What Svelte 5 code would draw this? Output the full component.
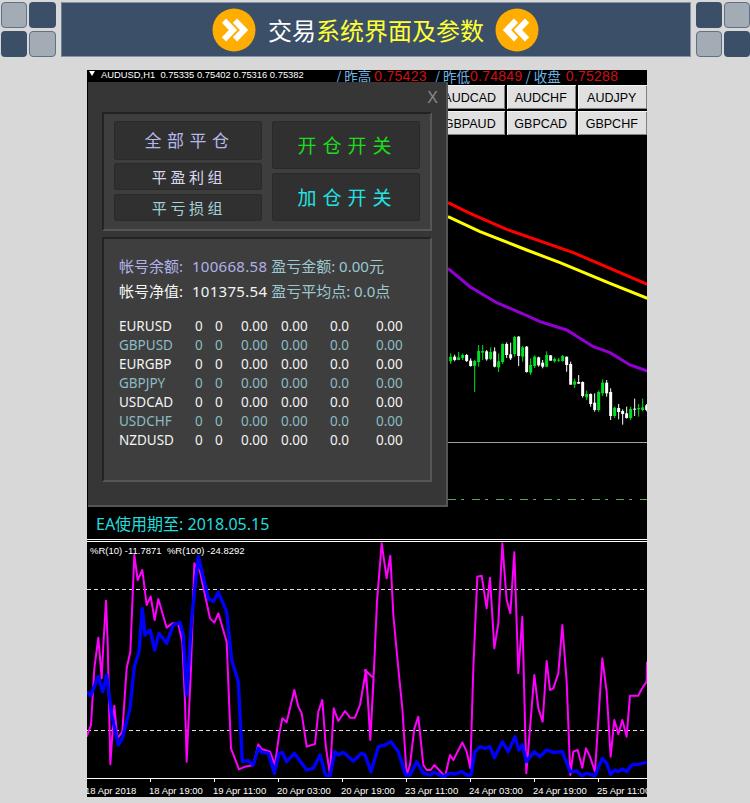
<script>
  const pts = (a, dx = 0) => a.map(([x, y]) => `${x + dx},${y}`).join(' ');
  const magL = [[5,605],[18,570],[28,400],[40,308],[50,430],[55,330],[63,197],[68,320],[76,688],[88,512],[97,610],[112,590],[125,400],[136,350],[148,60],[158,135],[172,105],[185,210],[197,185],[209,255],[220,192],[245,278],[262,265],[280,268],[292,320],[300,500],[305,680],[318,400],[328,85],[345,110],[375,250],[388,263],[400,235],[425,320],[438,640],[462,703],[480,695],[505,690],[520,628],[530,642],[555,650],[570,690],[582,600],[592,550],[605,562],[628,465],[640,515],[650,535],[665,635],[690,627],[700,530],[712,495],[722,630],[735,720],[746,520],[760,558],[780,528],[795,548],[810,548],[825,510],[843,405],[856,615],[866,430]];
  const magR = [[0,405],[8,480],[16,615],[28,380],[36,200],[50,25],[65,130],[76,62],[85,240],[100,400],[112,520],[125,720],[135,690],[148,580],[160,545],[175,690],[185,705],[197,705],[208,690],[222,705],[240,725],[255,660],[265,675],[292,622],[305,650],[316,700],[325,400],[337,125],[350,122],[365,220],[375,128],[388,340],[400,265],[412,25],[425,195],[436,235],[448,52],[460,415],[472,245],[484,715],[495,580],[508,420],[520,520],[533,560],[545,378],[555,465],[565,460],[580,415],[592,270],[605,440],[616,720],[625,650],[638,645],[652,698],[663,640],[675,665],[690,710],[712,370],[725,470],[737,665],[748,555],[760,598],[772,555],[785,605],[795,482],[820,482],[830,462],[845,440],[846,380]];
  const bluL = [[5,470],[17,482],[40,425],[53,470],[65,420],[80,540],[100,630],[112,610],[135,520],[148,395],[162,350],[172,220],[180,300],[195,285],[209,345],[222,295],[245,325],[265,270],[285,262],[295,300],[305,480],[320,250],[340,65],[370,190],[385,200],[400,172],[425,230],[440,375],[460,440],[472,680],[490,677],[505,690],[520,640],[530,652],[550,655],[568,715],[582,655],[592,652],[605,680],[628,655],[665,705],[685,700],[705,660],[722,720],[735,722],[750,650],[760,660],[775,652],[805,678],[830,655],[840,660]];
  const bluR = [[18,710],[40,635],[60,630],[78,620],[100,650],[122,720],[135,720],[155,680],[175,715],[195,720],[208,712],[235,725],[255,715],[270,717],[290,710],[305,720],[318,720],[330,650],[345,635],[360,640],[375,635],[388,668],[412,620],[430,650],[450,605],[462,645],[472,630],[484,680],[508,650],[525,665],[545,645],[565,652],[592,650],[615,710],[635,708],[650,722],[665,715],[690,722],[712,670],[725,685],[737,718],[750,705],[760,710],[772,702],[785,710],[800,690],[820,688],[845,682]];
  const magenta = pts(magL) + ' ' + pts(magR, 840);
  const blue = pts(bluL) + ' ' + pts(bluR, 840);

  const red = pts([[24,68],[90,100],[200,148],[400,218],[510,265],[622,313]]);
  const yellow = pts([[24,110],[120,155],[260,210],[360,248],[510,310],[622,355]]);
  const purple = pts([[24,265],[90,320],[170,368],[250,402],[300,425],[380,450],[460,500],[510,518],[570,555],[622,573]]);

  const candles = [
    ['g',520,552,530,544],['w',524,544,530,540],['g',516,540,532,540],['g',520,540,525,534],['w',522,546,525,543],
    ['w',535,560,542,558],['g',540,636,543,558],['g',495,560,513,546],['g',495,540,513,518],['w',510,542,514,538],
    ['g',502,540,516,537],['w',502,562,514,560],['g',520,576,544,562],['g',490,552,492,546],['w',487,534,492,525],
    ['w',488,540,523,535],['g',468,530,471,522],['w',468,558,470,528],['g',498,545,502,530],['w',498,578,500,576],
    ['g',535,585,555,578],['g',526,564,530,558],['w',530,560,532,556],['w',540,565,548,560],['g',514,562,525,560],
    ['w',525,542,526,542],['g',532,548,537,544],['g',534,546,539,542],['g',525,545,528,543],['w',530,575,530,555],
    ['w',545,614,552,614],['g',596,624,604,614],['w',585,612,606,611],['w',604,653,606,648],['g',632,660,642,652],
    ['w',640,680,642,672],['w',640,695,668,690],['g',632,695,636,690],['g',598,648,608,640],['w',600,650,608,640],
    ['w',625,720,636,708],['g',680,714,683,708],['w',672,718,684,696],['w',688,734,693,702],['w',680,716,700,714],
    ['g',680,720,687,714],['w',656,708,686,688],['g',672,710,684,688],['g',656,694,682,690],['w',672,694,676,690]
  ].map(([c, hi, lo, t, b], i) => ({ fill: c === 'g' ? '#00e020' : '#fff', x: 32 + i * 12, hi, lo, t, h: Math.max(b - t, 3) }));

  const ticks = [
    [63, '18 Apr 19:00'], [127, '19 Apr 11:00'], [191, '20 Apr 03:00'], [255, '20 Apr 19:00'],
    [319, '23 Apr 11:00'], [383, '24 Apr 03:00'], [447, '24 Apr 19:00'], [511, '25 Apr 11:00']
  ];
  const symbols = ['EURUSD', 'GBPUSD', 'EURGBP', 'GBPJPY', 'USDCAD', 'USDCHF', 'NZDUSD'];
  const buttons = ['AUDCAD', 'AUDCHF', 'AUDJPY', 'GBPAUD', 'GBPCAD', 'GBPCHF'];
</script>

<div class="page">
  <header class="top">
    <div class="tiles">
      <span class="tile light"></span><span class="tile"></span>
      <span class="tile"></span><span class="tile light"></span>
    </div>
    <div class="banner">
      <svg class="badge" viewBox="-22 -22 44 44" width="44" height="44">
        <circle r="21.5" fill="#ffad00" />
        <path d="M-10-9.3-1 0-10 9.3M1-9.3 10 0 1 9.3" fill="none" stroke="#fff" stroke-width="6" />
      </svg>
      <h1><span class="white">交易</span>系统界面及参数</h1>
      <svg class="badge" viewBox="-22 -22 44 44" width="44" height="44">
        <circle r="21.5" fill="#ffad00" />
        <path d="M10-9.3 1 0 10 9.3M-1-9.3-10 0-1 9.3" fill="none" stroke="#fff" stroke-width="6" />
      </svg>
    </div>
    <div class="tiles narrow">
      <span class="tile"></span><span class="tile light"></span>
      <span class="tile light"></span><span class="tile"></span>
    </div>
  </header>

  <section class="terminal">
    <div class="main">
      <svg class="canvas" width="560" height="469" viewBox="0 0 560 469">
        <g transform="translate(353 110) scale(.33333)">
          <polyline points={purple} class="ma" stroke="#9400d3" />
          <polyline points={yellow} class="ma" stroke="#ffff00" />
          <polyline points={red} class="ma" stroke="#ff0000" />
          {#each candles as c}
            <rect x={c.x - 1.5} y={c.hi} width="3" height={c.lo - c.hi} fill={c.fill} />
            <rect x={c.x - 4.5} y={c.t} width="9" height={c.h} fill={c.fill} />
          {/each}
        </g>
        <rect x="360" y="372" width="200" height="1" fill="#9aa3ad" />
        <line x1="361" y1="429.5" x2="560" y2="429.5" stroke="#4caf4c" stroke-dasharray="8 5 3 8" />
      </svg>

      <div class="quotes">
        <span class="tri"></span>
        <span class="ohlc">AUDUSD,H1&nbsp;&nbsp;0.75335 0.75402 0.75316 0.75382</span>
        <span class="prices">
          <i>/ 昨高</i> <b>0.75423</b> <i class="gap">/ 昨低</i><b>0.74849</b> <i>/ 收盘</i> <b class="last">0.75288</b>
        </span>
      </div>

      <div class="pairs">
        {#each buttons as b}<div class="pair">{b}</div>{/each}
      </div>

      <div class="panel">
        <span class="close">X</span>
        <div class="box controls">
          <div class="col left">
            <div class="btn big lav">全部平仓</div>
            <div class="btn small pale">平盈利组</div>
            <div class="btn small teal">平亏损组</div>
          </div>
          <div class="col">
            <div class="btn toggle green">开仓开关</div>
            <div class="btn toggle cyan">加仓开关</div>
          </div>
        </div>
        <div class="box stats">
          <div class="summary">
            <div><span class="lavtext">帐号余额: <span class="num">100668.58</span></span> <span class="tealtext">盈亏金额: 0.00元</span></div>
            <div><span class="whitetext">帐号净值: <span class="num">101375.54</span></span> <span class="tealtext">盈亏平均点: 0.0点</span></div>
          </div>
          <div class="table">
            {#each symbols as s, i}
              <div class="row" class:alt={i % 2 === 1}>
                <span>{s}</span><span>0</span><span>0</span><span>0.00</span><span>0.00</span><span>0.0</span><span>0.00</span>
              </div>
            {/each}
          </div>
        </div>
      </div>

      <div class="expiry">EA使用期至: 2018.05.15</div>
    </div>

    <svg class="sub" width="560" height="255" viewBox="0 0 560 255">
      <line x1="0" x2="560" y1="47.5" y2="47.5" class="dash" />
      <line x1="0" x2="560" y1="188.5" y2="188.5" class="dash" />
      <g transform="translate(-2 -7) scale(.33333)">
        <polyline points={magenta} fill="none" stroke="#ff00ff" stroke-width="6" stroke-linejoin="round" />
        <polyline points={blue} fill="none" stroke="#0000ff" stroke-width="10" stroke-linejoin="round" />
      </g>
      <text x="3" y="12" class="label">%R(10) -11.7871&#160;&#160;%R(100) -24.8292</text>
      <rect x="0" y="236" width="560" height="1" fill="#fff" />
      <text x="-2" y="252" class="label">18 Apr 2018</text>
      {#each ticks as [x, t]}
        <rect x={x} y="236" width="1" height="4" fill="#fff" />
        <text x={x - 1} y="252" class="label">{t}</text>
      {/each}
    </svg>
  </section>
</div>

<style>
  :global(body) { margin: 0; background: #d8d8d8; }
  .page { width: 750px; height: 803px; overflow: hidden; background: #d8d8d8; font-family: "Noto Sans", "Noto Sans CJK SC", sans-serif; }
  .top { display: flex; padding: 2px 0 0 1px; height: 55px; }
  .tiles { display: grid; grid-template-columns: 26px 27px; grid-template-rows: 26px 26px; gap: 3px 2px; flex: none; }
  .tiles.narrow { grid-template-columns: 26px 26px; }
  .tile { background: #3b5068; border-radius: 4px; box-sizing: border-box; }
  .tile.light { background: #a3abb5; border: 1px solid #5f7186; }
  .banner { width: 630px; flex: none; margin: 0 5px; box-sizing: border-box; background: #3b5068; border: 1px solid #8494a6; border-left-color: #6d7f93; display: flex; align-items: center; padding-left: 150px; }
  .badge { flex: none; }
  h1 { margin: 0 11px 0 12px; font-size: 24px; font-weight: 400; line-height: 30px; color: #ffff33; font-family: "Noto Sans CJK SC", sans-serif; white-space: nowrap; }
  .white { color: #fff; }
  .terminal { margin: 13px 0 0 87px; width: 560px; background: #000; }
  .main { position: relative; height: 469px; background: #000; border-bottom: 1px solid #fff; overflow: hidden; margin-bottom: 1px; }
  .canvas { position: absolute; left: 0; top: 0; }
  .ma { fill: none; stroke-width: 9; }
  .quotes { position: relative; height: 15px; color: #fff; white-space: nowrap; overflow: hidden; }
  .tri { position: absolute; left: 2px; top: 1px; border: 3.5px solid transparent; border-top: 5px solid #fff; border-bottom: 0; }
  .ohlc { position: absolute; left: 14px; top: -2px; font: 9.4px/14px "Liberation Sans", sans-serif; }
  .prices { position: absolute; left: 249px; top: -3px; font: 13.5px/18px "Noto Sans CJK SC", sans-serif; }
  .prices i { font-style: normal; color: #6fb4e4; }
  .prices i.gap { margin-left: 5px; }
  .prices b { position: relative; top: -1px; font: 400 14px/18px "Liberation Sans", sans-serif; letter-spacing: .25px; color: #d01010; }
  .prices b.last { margin-left: 2px; }
  .pairs { position: relative; display: grid; grid-template-columns: repeat(3, 69.5px); gap: 2px 1.5px; justify-content: end; }
  .pair { height: 24px; padding-right: 2px; background: #e0e0e0; border-top: 1px solid #f4f4f4; border-left: 1px solid #f4f4f4; box-sizing: border-box; box-shadow: inset -1px -1px 0 #808080; color: #000; font: 12.5px/24px "Liberation Sans", sans-serif; text-align: center; }
  .panel { position: absolute; left: 1px; top: 12px; width: 360px; height: 425px; box-sizing: border-box; background: #363636; border-right: 2px solid #555; border-bottom: 2px solid #555; padding: 30px 14px 0 14px; display: flex; flex-direction: column; gap: 6px; }
  .close { position: absolute; right: 8px; top: 7px; color: #8a8a8a; font: 16px/18px "Liberation Sans", sans-serif; }
  .box { background: #3e3e3e; border: 2px solid; border-color: #232323 #565656 #565656 #232323; box-sizing: border-box; width: 330px; }
  .controls { height: 119px; display: flex; gap: 10px; padding: 7px 0 0 10px; }
  .col { display: flex; flex-direction: column; gap: 4px; width: 148px; }
  .col.left { gap: 3px; }
  .btn { background: #303030; border: 1px solid #2a2a2a; border-radius: 2px; box-sizing: border-box; display: flex; align-items: center; justify-content: center; font-family: "Noto Sans CJK SC", sans-serif; white-space: nowrap; }
  .big { height: 39px; font-size: 17px; letter-spacing: 5.5px; padding: 0 0 2px 3px; color: #b6b8ea; }
  .small { height: 27px; font-size: 15px; letter-spacing: 3.6px; padding: 0 0 1px 2px; }
  .col.left .small + .small { margin-top: 1px; }
  .pale { color: #d8d8ee; }
  .teal { color: #a4d0d8; }
  .toggle { height: 48px; font-size: 19px; letter-spacing: 6px; padding: 0 0 2px 3px; }
  .green { color: #1cdc1c; }
  .cyan { color: #22e4e4; }
  .stats { height: 245px; padding: 15px 0 0 15px; }
  .summary { font-size: 15px; line-height: 25px; white-space: nowrap; }
  .num { margin-left: 5px; letter-spacing: .3px; }
  .lavtext { color: #b0b2e8; }
  .tealtext { color: #9cc8d0; }
  .whitetext { color: #f4f4f4; }
  .table { margin-top: 13px; }
  .row { display: grid; grid-template-columns: 76px 20px 26px 40px 49px 46px 40px; height: 19px; font-size: 13.5px; line-height: 19px; color: #f4f4f4; white-space: nowrap; }
  .row.alt { color: #8cbcc4; }
  .expiry { position: absolute; left: 9px; top: 443px; color: #22dcdc; font-size: 16px; line-height: 22px; white-space: nowrap; }
  .sub { display: block; border-top: 1px solid #fff; }
  .dash { stroke: #ddd; stroke-dasharray: 4 3; }
  .label { fill: #fff; font: 9.5px "Liberation Sans", sans-serif; }
</style>
